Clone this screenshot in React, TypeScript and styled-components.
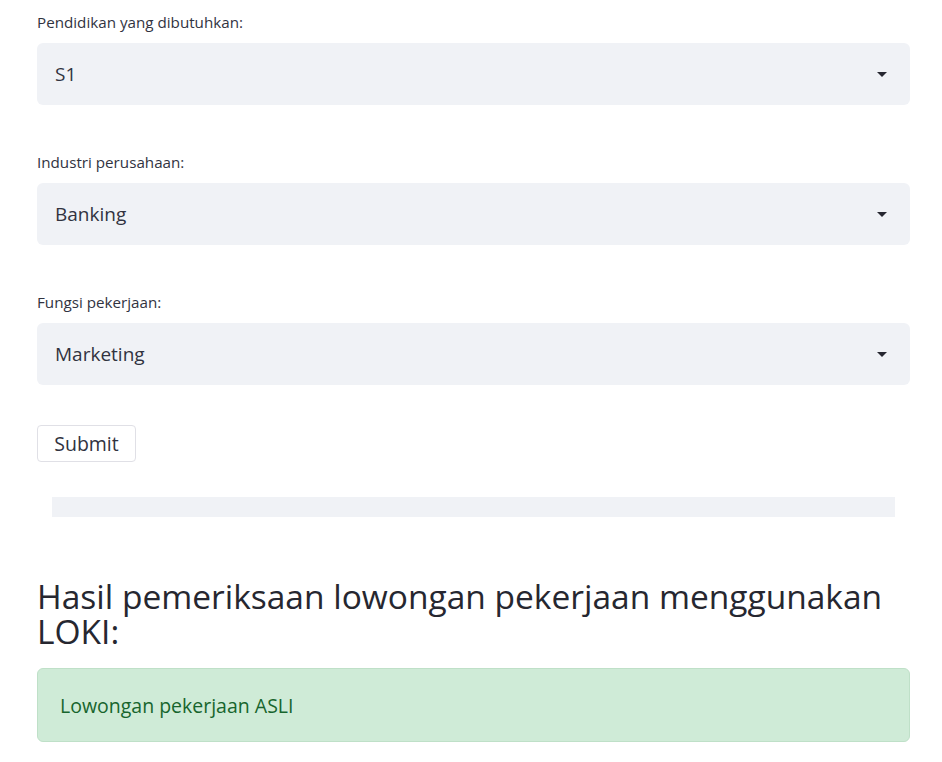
import React from "react";
import styled, { createGlobalStyle } from "styled-components";

const Global = createGlobalStyle`
  html, body { margin: 0; padding: 0; background: #ffffff; }
  body { font-family: "Open Sans", "Noto Sans", sans-serif; color: #31333f; }
`;

const Page = styled.main`
  padding: 11px 32px 20px 37px;
  display: flex;
  flex-direction: column;
`;

const Field = styled.div`
  display: flex;
  flex-direction: column;
  gap: 10px;
  margin-bottom: 46px;
`;

const Label = styled.label`
  font-size: 15.2px;
  line-height: 22px;
  color: #31333f;
`;

const SelectBox = styled.div`
  height: 62px;
  box-sizing: border-box;
  background: #f0f2f6;
  border-radius: 6px;
  display: flex;
  align-items: center;
  justify-content: space-between;
  padding: 0 23px 0 18px;
  font-size: 19px;
  color: #31333f;
`;

const Caret = styled.svg`
  width: 10px;
  height: 5px;
  fill: #262730;
`;

const ButtonRow = styled.div`
  margin-top: -6px;
  display: flex;
`;

const Button = styled.button`
  height: 37px;
  width: 99px;
  box-sizing: border-box;
  background: #ffffff;
  border: 1px solid #e0e0e6;
  border-radius: 4px;
  font-family: inherit;
  font-size: 19.5px;
  color: #31333f;
  padding: 0;
`;

const Bar = styled.div`
  margin: 35px 15px 0 15px;
  height: 20px;
  background: #f0f2f6;
`;

const Heading = styled.h3`
  margin: 62px 0 0 0;
  font-size: 33.5px;
  line-height: 35px;
  font-weight: 400;
  color: #262730;
`;

const Alert = styled.div`
  margin-top: 19px;
  height: 74px;
  box-sizing: border-box;
  background: #cfebd7;
  border: 1px solid #bfe0c8;
  border-radius: 6px;
  display: flex;
  align-items: center;
  padding: 0 22px;
  font-size: 19.5px;
  color: #17652d;
`;

const fields = [
  { label: "Pendidikan yang dibutuhkan:", value: "S1" },
  { label: "Industri perusahaan:", value: "Banking" },
  { label: "Fungsi pekerjaan:", value: "Marketing" },
];

export default function App() {
  return (
    <>
      <Global />
      <Page>
        {fields.map((f) => (
          <Field key={f.label}>
            <Label>{f.label}</Label>
            <SelectBox>
              <span>{f.value}</span>
              <Caret viewBox="0 0 10 5">
                <path d="M0 0 L10 0 L5 5 Z" />
              </Caret>
            </SelectBox>
          </Field>
        ))}
        <ButtonRow>
          <Button>Submit</Button>
        </ButtonRow>
        <Bar />
        <Heading>Hasil pemeriksaan lowongan pekerjaan menggunakan LOKI:</Heading>
        <Alert>Lowongan pekerjaan ASLI</Alert>
      </Page>
    </>
  );
}
